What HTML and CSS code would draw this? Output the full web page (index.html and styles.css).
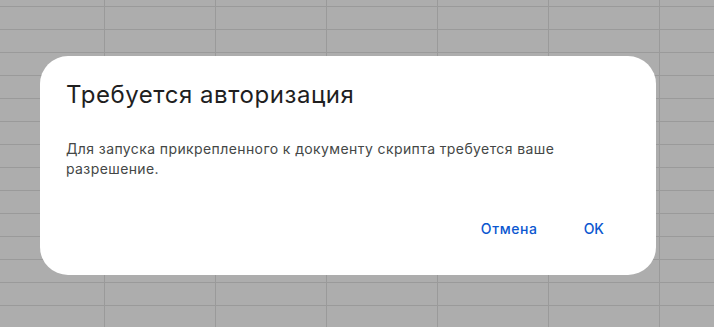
FILE: index.html
```html
<!DOCTYPE html>
<html lang="ru">
<head>
<meta charset="utf-8">
<link rel="stylesheet" href="styles.css">
</head>
<body>
<div class="sheet"></div>
<div class="dialog" role="dialog">
  <h1 class="title">Требуется авторизация</h1>
  <p class="text">Для запуска прикрепленного к документу скрипта требуется ваше разрешение.</p>
  <div class="actions">
    <button class="btn btn-cancel">Отмена</button>
    <button class="btn">OK</button>
  </div>
</div>
</body>
</html>
```

FILE: styles.css
```css
html, body {
  margin: 0;
  padding: 0;
  width: 714px;
  height: 327px;
  overflow: hidden;
}
body {
  position: relative;
  background: #adadad;
  font-family: Inter, Roboto, "Noto Sans", sans-serif;
}
.sheet {
  width: 100%;
  height: 100%;
  background-color: #adadad;
  background-image:
    repeating-linear-gradient(to bottom, transparent 0 6px, #9a9a9a 6px 7px, transparent 7px 23px),
    repeating-linear-gradient(to right, transparent 0 104px, #9a9a9a 104px 105px, transparent 105px 111px);
  background-size: 100% 23px, 111px 100%;
}
.dialog {
  position: absolute;
  left: 40px;
  top: 56px;
  width: 616px;
  height: 219px;
  box-sizing: border-box;
  background: #fff;
  border-radius: 28px;
  padding: 23px 40px 0 26px;
  display: flex;
  flex-direction: column;
}
.title {
  margin: 0;
  font-size: 24px;
  line-height: 32px;
  font-weight: 400;
  letter-spacing: 0.55px;
  color: #1f1f1f;
}
.text {
  margin: 28px 0 0;
  font-size: 14px;
  line-height: 20px;
  letter-spacing: 0.4px;
  color: #444746;
  max-width: 510px;
}
.actions {
  display: flex;
  justify-content: flex-end;
  gap: 22px;
  margin-top: 29px;
}
.btn {
  border: none;
  background: none;
  height: 40px;
  padding: 0 12px;
  font-family: inherit;
  font-size: 14px;
  font-weight: 500;
  color: #0b57d0;
}
.btn-cancel {
  letter-spacing: 0.6px;
}
```
